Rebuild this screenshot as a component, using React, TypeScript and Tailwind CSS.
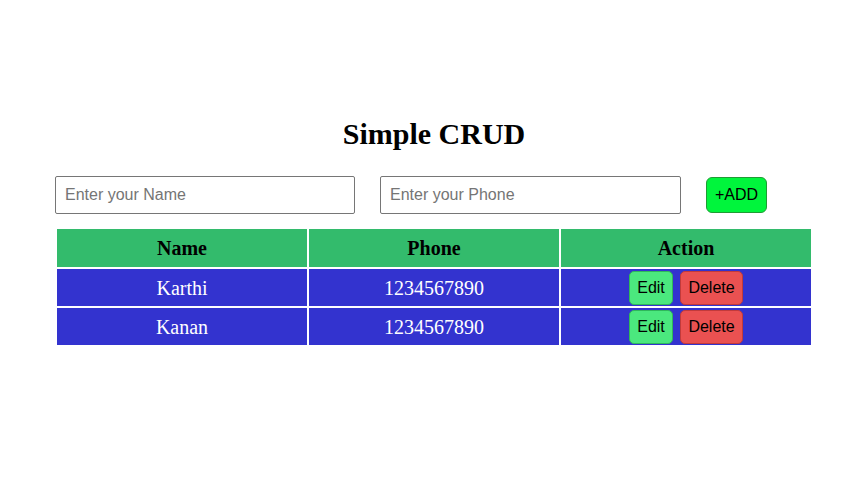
export default function App() {
  const users = [
    { name: "Karthi", phone: "1234567890" },
    { name: "Kanan", phone: "1234567890" },
  ];

  return (
    <main className="w-[861px] h-[496px] bg-white pt-[117px] pl-[54px]" style={{ fontFamily: '"Liberation Serif", serif' }}>
      <div className="w-[760px]">
        <h1 className="text-center text-[30px] font-bold leading-[34px] text-black">Simple CRUD</h1>
        <div className="flex items-center mt-[25px] ml-[1px] font-['Liberation_Sans',sans-serif]">
          <input
            className="w-[300px] h-[38px] border border-[#767676] rounded-[2px] px-[9px] text-[16px] placeholder:text-[#757575] outline-none"
            placeholder="Enter your Name"
          />
          <input
            className="ml-[25px] w-[301px] h-[38px] border border-[#767676] rounded-[2px] px-[9px] text-[16px] placeholder:text-[#757575] outline-none"
            placeholder="Enter your Phone"
          />
          <button className="ml-[25px] w-[61px] h-[36px] bg-[#00f53c] border border-[#1f9c34] rounded-[6px] text-[16px] text-black">
            +ADD
          </button>
        </div>
        <table className="mt-[13px] ml-[1px] w-[758px] border-separate border-spacing-[2px] table-fixed">
          <thead>
            <tr className="bg-[#33bb6c] h-[38px]">
              <th className="p-0 text-[20px] font-bold text-black">Name</th>
              <th className="p-0 text-[20px] font-bold text-black">Phone</th>
              <th className="p-0 text-[20px] font-bold text-black">Action</th>
            </tr>
          </thead>
          <tbody>
            {users.map((u) => (
              <tr key={u.name} className="bg-[#3333cf] h-[37px]">
                <td className="p-0 text-center text-[20px] text-white">{u.name}</td>
                <td className="p-0 text-center text-[20px] text-white">{u.phone}</td>
                <td className="p-0 text-center">
                  <div className="flex justify-center gap-[7px] font-['Liberation_Sans',sans-serif] text-[16px]">
                    <button className="w-[44px] h-[34px] bg-[#4be87e] border border-[#2fb85a] rounded-[5px] text-black">Edit</button>
                    <button className="w-[63px] h-[34px] bg-[#ea5151] border border-[#c23a3a] rounded-[5px] text-black">Delete</button>
                  </div>
                </td>
              </tr>
            ))}
          </tbody>
        </table>
      </div>
    </main>
  );
}
